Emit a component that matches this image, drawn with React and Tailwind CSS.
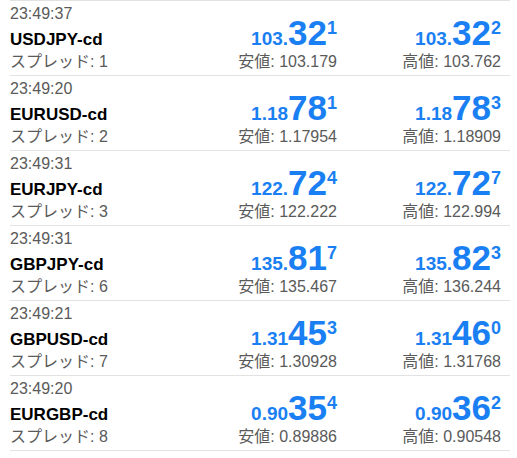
const rows = [
  { time: '23:49:37', symbol: 'USDJPY-cd', spread: 1, bid: ['103.', '32', '1'], low: '103.179', ask: ['103.', '32', '2'], high: '103.762' },
  { time: '23:49:20', symbol: 'EURUSD-cd', spread: 2, bid: ['1.18', '78', '1'], low: '1.17954', ask: ['1.18', '78', '3'], high: '1.18909' },
  { time: '23:49:31', symbol: 'EURJPY-cd', spread: 3, bid: ['122.', '72', '4'], low: '122.222', ask: ['122.', '72', '7'], high: '122.994' },
  { time: '23:49:31', symbol: 'GBPJPY-cd', spread: 6, bid: ['135.', '81', '7'], low: '135.467', ask: ['135.', '82', '3'], high: '136.244' },
  { time: '23:49:21', symbol: 'GBPUSD-cd', spread: 7, bid: ['1.31', '45', '3'], low: '1.30928', ask: ['1.31', '46', '0'], high: '1.31768' },
  { time: '23:49:20', symbol: 'EURGBP-cd', spread: 8, bid: ['0.90', '35', '4'], low: '0.89886', ask: ['0.90', '36', '2'], high: '0.90548' },
]

const Price = ({ parts }) => (
  <div className="text-right text-[35px] leading-[22px] font-bold text-[#1a7ff2] whitespace-nowrap">
    <span className="text-[19px]">{parts[0]}</span>
    <span className="font-['Liberation_Sans_Narrow','Liberation_Sans',sans-serif]">{parts[1]}</span>
    <span className="text-[18px] leading-[12px] align-[11px]">{parts[2]}</span>
  </div>
)

const QuoteRow = ({ row }) => (
  <div className="h-[75px] border-b border-[#e2e2e2] pr-[9px]">
    <div className="pt-[5px] text-[16px] leading-[16px] text-[#5a5a5a]">{row.time}</div>
    <div className="grid grid-cols-[1fr_164px_164px] items-baseline">
      <div className="text-[17px] leading-[22px] font-bold text-black">{row.symbol}</div>
      <Price parts={row.bid} />
      <Price parts={row.ask} />
      <div className="text-[16px] leading-[22px] text-[#5a5a5a]">スプレッド: {row.spread}</div>
      <div className="text-right text-[16px] leading-[22px] text-[#5a5a5a]">安値: {row.low}</div>
      <div className="text-right text-[16px] leading-[22px] text-[#5a5a5a]">高値: {row.high}</div>
    </div>
  </div>
)

export default function App() {
  return (
    <div className="w-[517px] h-[458px] bg-white overflow-hidden font-['Liberation_Sans','Noto_Sans_CJK_JP',sans-serif]">
      <div className="ml-[10px] mr-[7px] border-t border-[#e2e2e2]">
        {rows.map((row) => (
          <QuoteRow key={row.symbol} row={row} />
        ))}
      </div>
    </div>
  )
}
